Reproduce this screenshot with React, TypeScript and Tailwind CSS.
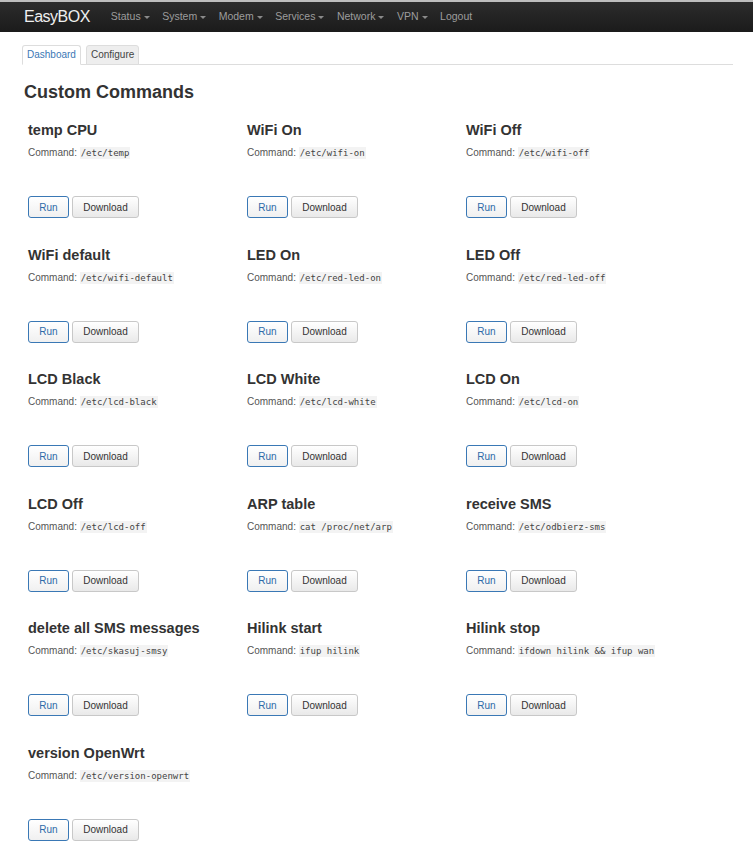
import React from "react"

const commands = [
  { title: "temp CPU", cmd: "/etc/temp" },
  { title: "WiFi On", cmd: "/etc/wifi-on" },
  { title: "WiFi Off", cmd: "/etc/wifi-off" },
  { title: "WiFi default", cmd: "/etc/wifi-default" },
  { title: "LED On", cmd: "/etc/red-led-on" },
  { title: "LED Off", cmd: "/etc/red-led-off" },
  { title: "LCD Black", cmd: "/etc/lcd-black" },
  { title: "LCD White", cmd: "/etc/lcd-white" },
  { title: "LCD On", cmd: "/etc/lcd-on" },
  { title: "LCD Off", cmd: "/etc/lcd-off" },
  { title: "ARP table", cmd: "cat /proc/net/arp" },
  { title: "receive SMS", cmd: "/etc/odbierz-sms" },
  { title: "delete all SMS messages", cmd: "/etc/skasuj-smsy" },
  { title: "Hilink start", cmd: "ifup hilink" },
  { title: "Hilink stop", cmd: "ifdown hilink && ifup wan" },
  { title: "version OpenWrt", cmd: "/etc/version-openwrt" },
]

const menu = ["Status", "System", "Modem", "Services", "Network", "VPN"]

function Caret() {
  return (
    <span className="ml-[3px] inline-block align-middle border-x-[3px] border-t-[3px] border-x-transparent border-t-[#8a8a8a]" />
  )
}

function CommandCell({ title, cmd }: { title: string; cmd: string }) {
  return (
    <div className="px-[4px] pb-[26.5px]">
      <h3 className="text-[14.5px] leading-[20px] font-bold text-[#333]">{title}</h3>
      <div className="mt-[5px] text-[10px] leading-[16px] text-[#555]">
        Command:{" "}
        <code className="bg-[#f3f3f3] px-[1px] py-[1px] font-['DejaVu_Sans_Mono',monospace] text-[9px] text-[#444]">
          {cmd}
        </code>
      </div>
      <div className="mt-[35px] flex gap-[3px]">
        <button className="h-[22px] w-[41px] rounded-[3px] border border-[#3a78b5] bg-gradient-to-b from-white to-[#f0f0f0] text-[10px] text-[#2d6aa8]">
          Run
        </button>
        <button className="h-[22px] w-[67px] rounded-[3px] border border-[#c8c8c8] bg-gradient-to-b from-white to-[#e9e9e9] text-[10px] text-[#333]">
          Download
        </button>
      </div>
    </div>
  )
}

export default function App() {
  return (
    <div className="min-h-[857px] bg-white font-['Liberation_Sans',Arial,sans-serif]">
      {/* Navbar */}
      <div className="h-[32px] border-t-2 border-[#bdbdbd] bg-gradient-to-b from-[#2c2c2c] to-[#1b1b1b]">
        <div className="flex h-[30px] items-center pl-[24px]">
          <span className="text-[16px] tracking-[-0.5px] text-[#efefef]">EasyBOX</span>
          <div className="ml-[21px] flex items-center gap-[12.5px] text-[10.5px] text-[#9d9d9d]">
            {menu.map((m) => (
              <span key={m} className="flex items-center">
                {m}
                <Caret />
              </span>
            ))}
            <span>Logout</span>
          </div>
        </div>
      </div>

      <div className="px-[24px]">
        {/* Tabs */}
        <div className="mt-[13px] mr-[-4px] flex items-end gap-[5px] border-b border-[#dddddd] text-[10px] leading-[12px]">
          <div className="-mb-px ml-[-2px] rounded-t-[3px] border border-b-white border-[#dddddd] bg-white px-[4px] py-[3px] text-[#3a78b5]">
            Dashboard
          </div>
          <div className="-mb-px rounded-t-[3px] border border-[#dddddd] bg-[#eeeeee] px-[4px] py-[3px] text-[#444]">
            Configure
          </div>
        </div>

        <h2 className="mt-[15px] text-[18px] leading-[24px] font-bold text-[#333]">Custom Commands</h2>

        <div className="mt-[16px] grid grid-cols-[219px_219px_219px]">
          {commands.map((c) => (
            <CommandCell key={c.title} title={c.title} cmd={c.cmd} />
          ))}
        </div>
      </div>
    </div>
  )
}
